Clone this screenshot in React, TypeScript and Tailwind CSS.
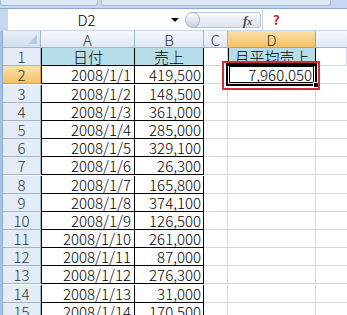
import React from "react";

const rows: [string, string][] = [
  ["2008/1/1", "419,500"],
  ["2008/1/2", "148,500"],
  ["2008/1/3", "361,000"],
  ["2008/1/4", "285,000"],
  ["2008/1/5", "329,100"],
  ["2008/1/6", "26,300"],
  ["2008/1/7", "165,800"],
  ["2008/1/8", "374,100"],
  ["2008/1/9", "126,500"],
  ["2008/1/10", "261,000"],
  ["2008/1/11", "87,000"],
  ["2008/1/12", "276,300"],
  ["2008/1/13", "31,000"],
  ["2008/1/14", "170,500"],
];

const colHead =
  "h-[17px] flex items-center justify-center border-r border-b border-[#9eb6ce] bg-gradient-to-b from-[#f7f9fd] to-[#dfe7f3] text-[#333]";
const rowHead =
  "h-[18px] flex items-center justify-center border-r border-b border-[#9eb6ce] bg-[#e4ecf7] text-[#333]";
const cell = "h-[18px] border-r border-b border-[#d0d7e5]";

export default function App() {
  return (
    <div
      className="w-[347px] h-[315px] overflow-hidden bg-white text-[15px] leading-[15px] font-light text-black"
      style={{ fontFamily: '"Noto Sans CJK JP", "Noto Sans", sans-serif' }}
    >
      {/* ribbon edge */}
      <div className="h-[8px] flex bg-[#c5d8ef]">
        <div className="w-[98px] h-[6px] rounded-b-[3px] border border-t-0 border-[#a4bcdb] bg-[#dde8f5]" />
        <div className="w-[230px] ml-[3px] h-[6px] rounded-b-[3px] border border-t-0 border-[#a4bcdb] bg-[#dde8f5]" />
      </div>

      {/* formula bar */}
      <div className="h-[22px] flex border-t border-[#8eaad0]">
        <div className="w-[8px] bg-[#c5d8ef]" />
        <div className="w-[157px] flex items-center justify-center bg-white">D2</div>
        <div className="w-[20px] flex items-center justify-center bg-white">
          <div className="w-0 h-0 border-l-[4px] border-r-[4px] border-t-[4px] border-l-transparent border-r-transparent border-t-black" />
        </div>
        <div className="w-[77px] flex items-center bg-white">
          <div className="relative w-[76px] h-[18px] flex items-center">
            <div className="absolute left-[6px] right-0 top-[1px] h-[16px] rounded-r-[3px] border border-[#b9c6d8] bg-gradient-to-b from-[#f7f9fc] to-[#dde4ee]" />
            <div className="absolute left-0 top-[1px] w-[15px] h-[16px] rounded-full border border-[#9fb0c6] bg-gradient-to-b from-[#ffffff] to-[#c8d2df]" />
            <span
              className="absolute left-[58px] top-[2px] italic font-bold text-[#4a4a4a] text-[13px]"
              style={{ fontFamily: '"Liberation Serif", serif' }}
            >
              f<span className="text-[10px]">x</span>
            </span>
          </div>
        </div>
        <div className="w-px bg-[#c9d3e0]" />
        <div className="flex-1 flex items-center pl-[10px] bg-white">
          <span className="text-[#c0203a] font-bold text-[13px]">?</span>
        </div>
      </div>
      <div className="h-px bg-[#c5d8ef]" />

      {/* sheet */}
      <div className="flex">
        <div className="w-[3px] h-[290px] bg-[#a9c2e2] border-r border-[#8eaad0]" />
        <div className="grid grid-cols-[38px_94px_69px_24px_88px_31px]">
          <div className="h-[17px] relative border-r border-b border-[#9eb6ce] bg-gradient-to-b from-[#e6eef8] to-[#d3e0f0]">
            <div
              className="absolute right-[3px] bottom-[3px] w-0 h-0"
              style={{ borderBottom: "9px solid #b7cbe5", borderLeft: "9px solid transparent" }}
            />
          </div>
          <div className={colHead}>A</div>
          <div className={colHead}>B</div>
          <div className={colHead}>C</div>
          <div className="h-[17px] flex items-center justify-center border-r border-b border-[#f29536] bg-gradient-to-b from-[#fbe0a8] to-[#f3c265] text-[#333]">
            D
          </div>
          <div className="h-[17px] border-b border-[#9eb6ce] bg-gradient-to-b from-[#f7f9fd] to-[#dfe7f3]" />

          {/* row 1 */}
          <div className={rowHead}>1</div>
          <div className="h-[18px] flex items-end justify-center pb-[1px] border-l border-r border-b border-black bg-[#b7dde8]">日付</div>
          <div className="h-[18px] flex items-end justify-center pb-[1px] border-r border-b border-black bg-[#b7dde8]">売上</div>
          <div className={cell} />
          <div className="h-[18px] flex items-end justify-center pb-[1px] border-l border-r border-b border-black bg-[#b7dde8]">月平均売上</div>
          <div className={cell} />

          {rows.map(([d, v], i) => {
            const n = i + 2;
            return (
              <React.Fragment key={n}>
                <div
                  className={
                    n === 2
                      ? "h-[18px] flex items-center justify-center border-r border-b border-[#f29536] bg-gradient-to-b from-[#fbe0a8] to-[#f3c265] text-[#333]"
                      : rowHead
                  }
                >
                  {n}
                </div>
                <div className="h-[18px] flex items-end justify-end pb-[1px] pr-[3px] border-l border-r border-b border-black">{d}</div>
                <div className="h-[18px] flex items-end justify-end pb-[1px] pr-[2px] border-r border-b border-black">{v}</div>
                <div className={cell} />
                {n === 2 ? (
                  <div className="relative h-[18px] flex items-end justify-end pb-[1px] pr-[3px] border-r border-b border-[#d0d7e5]">
                    7,960,050
                    <div className="absolute -left-[2px] -right-[2px] -top-[3px] -bottom-[3px] border-2 border-black" />
                    <div className="absolute left-[1px] right-[1px] top-0 bottom-0 border border-black" />
                    <div className="absolute -right-[4px] -bottom-[5px] w-[6px] h-[6px] bg-black border border-white" />
                    <div className="absolute -left-[6px] -right-[5px] -top-[5px] -bottom-[7px] border-2 border-[#d42a3a]" />
                  </div>
                ) : (
                  <div className={cell} />
                )}
                <div className="h-[18px] border-b border-[#d0d7e5]" />
              </React.Fragment>
            );
          })}
        </div>
      </div>
    </div>
  );
}
